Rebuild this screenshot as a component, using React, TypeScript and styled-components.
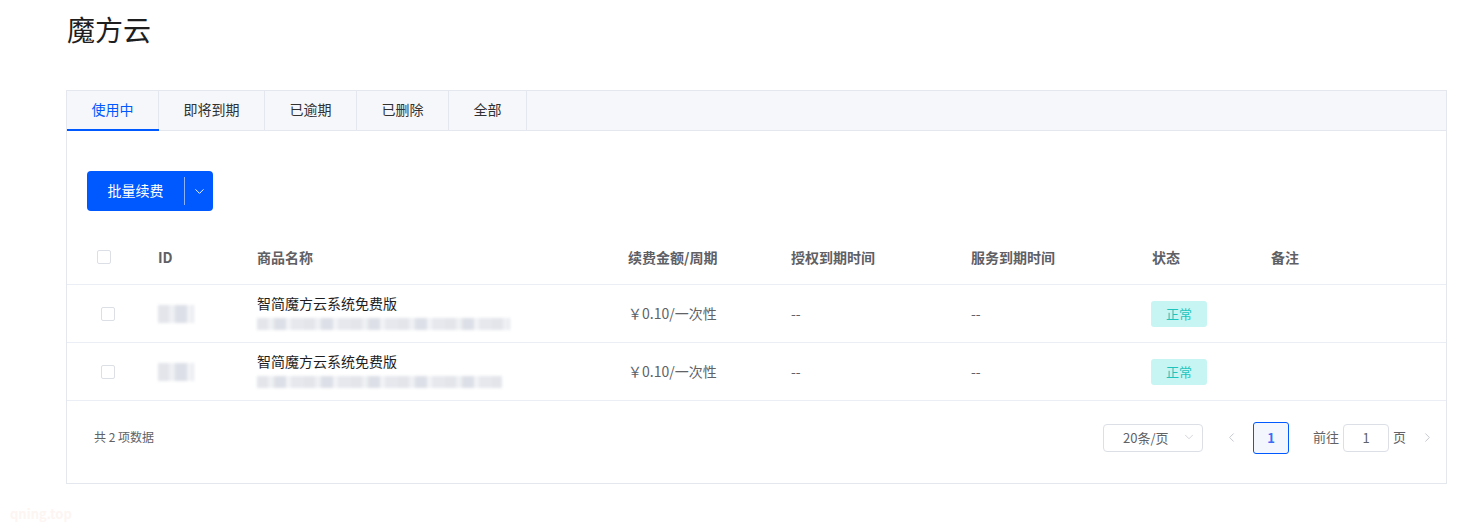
import React from 'react';
import styled, { createGlobalStyle } from 'styled-components';
import { ChevronDown, ChevronLeft, ChevronRight } from 'lucide-react';

const GlobalStyle = createGlobalStyle`
  *, *::before, *::after {
    box-sizing: border-box;
  }
  html, body {
    margin: 0;
    padding: 0;
    background: #ffffff;
    font-family: "Noto Sans CJK SC", "Liberation Sans", sans-serif;
    color: #303133;
  }
`;

const Page = styled.div`
  position: relative;
  width: 1468px;
  height: 532px;
  padding: 0 21px 0 66px;
  overflow: hidden;
`;

const Title = styled.h1`
  margin: 0;
  padding: 10px 0 0 1px;
  height: 90px;
  font-size: 28px;
  line-height: 38px;
  font-weight: 400;
  color: #1e1e1e;
`;

const Card = styled.div`
  border: 1px solid #e4e7ed;
  background: #fff;
`;

const TabBar = styled.div`
  display: flex;
  height: 40px;
  background: #f5f7fa;
  border-bottom: 1px solid #e4e7ed;
`;

const Tab = styled.div<{ $active?: boolean }>`
  position: relative;
  display: flex;
  align-items: center;
  padding: 0 24.5px 3px;
  font-size: 14px;
  color: ${(p) => (p.$active ? '#0058ff' : '#303133')};
  border-right: 1px solid #e4e7ed;
  &::after {
    content: '';
    position: absolute;
    left: 0;
    right: -1px;
    bottom: -1px;
    height: 2px;
    background: ${(p) => (p.$active ? '#0058ff' : 'transparent')};
  }
`;

const Toolbar = styled.div`
  padding: 40px 20px 22px;
`;

const SplitButton = styled.div`
  display: inline-flex;
  height: 40px;
  background: #0058ff;
  border-radius: 4px;
  color: #fff;
  font-size: 14px;
  overflow: hidden;
`;

const MainPart = styled.div`
  display: flex;
  align-items: center;
  justify-content: center;
  width: 97px;
  padding-bottom: 2px;
`;

const Divider = styled.div`
  width: 1px;
  margin: 6px 0;
  background: rgba(255, 255, 255, 0.55);
`;

const ArrowPart = styled.div`
  display: flex;
  align-items: center;
  justify-content: center;
  width: 28px;
`;

const COLS = '81px 99px 371px 163px 180px 181px 119px 1fr';

const HeadRow = styled.div`
  display: grid;
  grid-template-columns: ${COLS};
  height: 52px;
  border-bottom: 1px solid #ebeef5;
`;

const Row = styled.div`
  display: grid;
  grid-template-columns: ${COLS};
  height: 58px;
  border-bottom: 1px solid #ebeef5;
  &:last-of-type {
    height: 59px;
  }
`;

const Cell = styled.div<{ $pl?: number; $pb?: number }>`
  display: flex;
  flex-direction: column;
  justify-content: center;
  padding-left: ${(p) => p.$pl ?? 10}px;
  padding-bottom: ${(p) => p.$pb ?? 0}px;
  font-size: 14px;
  color: #606266;
`;

const HeadCell = styled(Cell)`
  font-weight: 700;
  color: #5f6064;
  padding-bottom: 3px;
`;

const Checkbox = styled.span`
  display: block;
  width: 14px;
  height: 14px;
  border: 1px solid #dcdfe6;
  border-radius: 2px;
  background: #fff;
`;

const Blur = styled.span<{ $w: number; $h: number }>`
  display: block;
  width: ${(p) => p.$w}px;
  height: ${(p) => p.$h}px;
  background: repeating-linear-gradient(
    90deg,
    #e3e5eb 0 11px,
    #eef0f3 11px 17px,
    #dcdfe7 17px 29px,
    #f2f3f6 29px 34px,
    #e6e8ee 34px 47px
  );
  filter: blur(1.5px);
`;

const Name = styled.div`
  color: #1e1e1e;
  font-size: 14px;
  line-height: 20px;
  margin-bottom: 5px;
`;

const Tag = styled.span`
  display: inline-flex;
  align-items: center;
  justify-content: center;
  width: 56px;
  height: 26px;
  padding-bottom: 1px;
  border-radius: 3px;
  background: #c7f5f3;
  color: #1cc4bc;
  font-size: 13px;
`;

const Footer = styled.div`
  display: flex;
  align-items: center;
  height: 82px;
  padding: 0 11px 9px 27px;
`;

const Total = styled.div`
  flex: 1;
  font-size: 12px;
  color: #606266;
  padding-bottom: 2px;
`;

const SizeSelect = styled.div`
  display: flex;
  align-items: center;
  justify-content: space-between;
  width: 100px;
  height: 28px;
  border: 1px solid #dcdfe6;
  border-radius: 4px;
  padding: 0 6px 1px 19px;
  font-size: 13px;
  color: #606266;
`;

const Arrow = styled.span<{ $ml: number }>`
  display: flex;
  align-items: center;
  margin-left: ${(p) => p.$ml}px;
  color: #c0c4cc;
`;

const PageBox = styled.div`
  display: flex;
  align-items: center;
  justify-content: center;
  width: 36px;
  height: 32px;
  border: 1px solid #0058ff;
  border-radius: 3px;
  background: #f3f6fd;
  color: #3b6cf6;
  font-weight: 700;
  font-size: 13px;
  margin: 0 24px 0 14px;
`;

const JumpLabel = styled.span`
  font-size: 13px;
  color: #606266;
  padding-bottom: 2px;
`;

const JumpInput = styled.div`
  display: flex;
  align-items: center;
  justify-content: center;
  width: 46px;
  height: 28px;
  border: 1px solid #dcdfe6;
  border-radius: 4px;
  margin: 0 4px;
  font-size: 13px;
  color: #606266;
`;

const Watermark = styled.div`
  position: absolute;
  left: 10px;
  bottom: 9px;
  font-size: 13px;
  font-weight: 700;
  color: #fdf5f2;
`;

const tabs = ['使用中', '即将到期', '已逾期', '已删除', '全部'];
const rows = [{ sub: 253 }, { sub: 245 }];

export default function App() {
  return (
    <Page>
      <GlobalStyle />
      <Title>魔方云</Title>
      <Card>
        <TabBar>
          {tabs.map((t, i) => (
            <Tab key={t} $active={i === 0}>
              {t}
            </Tab>
          ))}
        </TabBar>
        <Toolbar>
          <SplitButton>
            <MainPart>批量续费</MainPart>
            <Divider />
            <ArrowPart>
              <ChevronDown size={15} strokeWidth={1.5} />
            </ArrowPart>
          </SplitButton>
        </Toolbar>
        <HeadRow>
          <HeadCell $pl={30}>
            <Checkbox />
          </HeadCell>
          <HeadCell>ID</HeadCell>
          <HeadCell>商品名称</HeadCell>
          <HeadCell>续费金额/周期</HeadCell>
          <HeadCell>授权到期时间</HeadCell>
          <HeadCell>服务到期时间</HeadCell>
          <HeadCell>状态</HeadCell>
          <HeadCell>备注</HeadCell>
        </HeadRow>
        {rows.map((r, i) => (
          <Row key={i}>
            <Cell $pl={34}>
              <Checkbox />
            </Cell>
            <Cell>
              <Blur $w={36} $h={18} />
            </Cell>
            <Cell $pb={4}>
              <Name>智简魔方云系统免费版</Name>
              <Blur $w={r.sub} $h={12} />
            </Cell>
            <Cell $pb={1}>￥0.10/一次性</Cell>
            <Cell $pb={1}>--</Cell>
            <Cell $pb={1}>--</Cell>
            <Cell $pl={9}>
              <Tag>正常</Tag>
            </Cell>
            <Cell />
          </Row>
        ))}
        <Footer>
          <Total>共 2 项数据</Total>
          <SizeSelect>
            20条/页
            <Arrow $ml={0}>
              <ChevronDown size={14} strokeWidth={1.2} />
            </Arrow>
          </SizeSelect>
          <Arrow $ml={21}>
            <ChevronLeft size={15} strokeWidth={1.5} />
          </Arrow>
          <PageBox>1</PageBox>
          <JumpLabel>前往</JumpLabel>
          <JumpInput>1</JumpInput>
          <JumpLabel>页</JumpLabel>
          <Arrow $ml={14}>
            <ChevronRight size={15} strokeWidth={1.5} />
          </Arrow>
        </Footer>
      </Card>
      <Watermark>qning.top</Watermark>
    </Page>
  );
}
